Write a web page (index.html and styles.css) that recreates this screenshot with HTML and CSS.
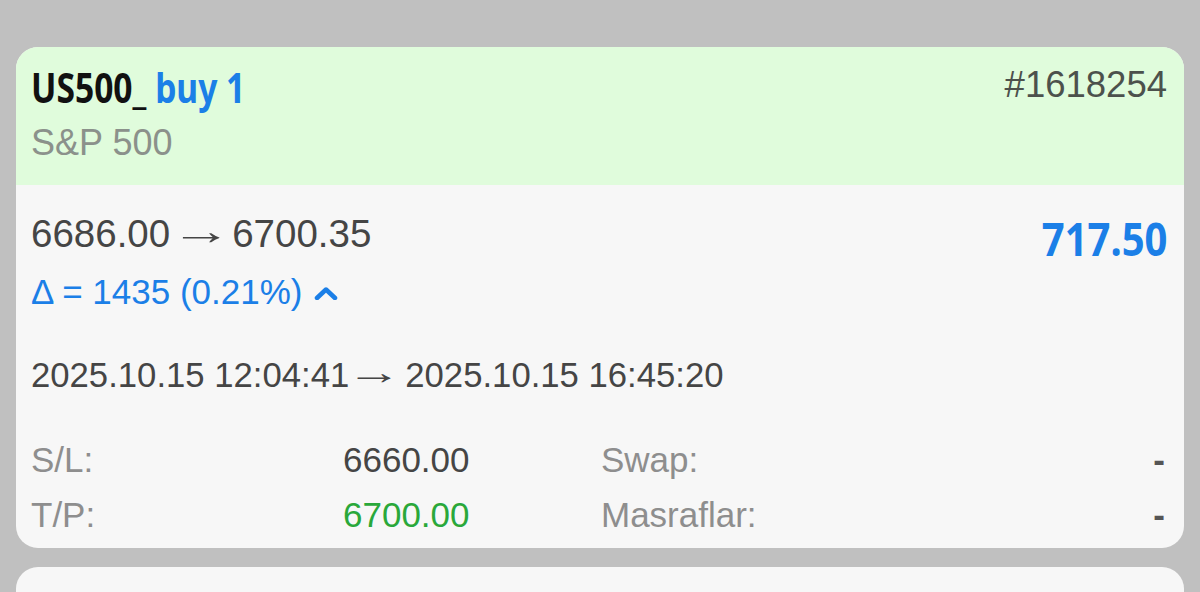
FILE: index.html
```html
<!DOCTYPE html>
<html lang="tr">
<head>
  <meta charset="UTF-8">
  <meta name="viewport" content="width=device-width, initial-scale=1.0">
  <title>Deal</title>
  <link rel="stylesheet" href="styles.css">
</head>
<body>
  <div class="deal-card">
    <div class="deal-head">
      <div class="head-row">
        <div class="deal-title"><span class="symbol">US500_</span> <span class="side">buy 1</span></div>
        <div class="deal-id">#1618254</div>
      </div>
      <div class="deal-desc">S&amp;P 500</div>
    </div>
    <div class="deal-body">
      <div class="price-row">
        <div class="prices">
          <div class="price-line">6686.00<span class="arrow">&rarr;</span>6700.35</div>
          <div class="delta-line">&Delta; = 1435 (0.21%)
            <svg class="chevron" width="24" height="14" viewBox="0 0 24 14"><polyline points="3,12 12,3.5 21,12" fill="none" stroke="currentColor" stroke-width="4.5" stroke-linecap="round" stroke-linejoin="round"/></svg>
          </div>
        </div>
        <div class="profit">717.50</div>
      </div>
      <div class="time-line">2025.10.15 12:04:41<span class="arrow">&rarr;</span>2025.10.15 16:45:20</div>
      <div class="deal-grid">
        <div class="label">S/L:</div>
        <div class="value">6660.00</div>
        <div class="label label-2">Swap:</div>
        <div class="value value-end">-</div>
        <div class="label">T/P:</div>
        <div class="value value-tp">6700.00</div>
        <div class="label label-2">Masraflar:</div>
        <div class="value value-end">-</div>
      </div>
    </div>
  </div>
  <div class="deal-card next-card"></div>
</body>
</html>
```

FILE: styles.css
```css
body {
  margin: 0;
  padding: 47px 16px 0 16px;
  background: #c0c0c0;
  font-family: "Liberation Sans", Arial, sans-serif;
  height: 592px;
  box-sizing: border-box;
  overflow: hidden;
}
.deal-card {
  background: #f7f7f7;
  border-radius: 22px;
  overflow: hidden;
}
.next-card {
  margin-top: 19px;
  height: 25px;
  border-radius: 22px 22px 0 0;
}
/* green header */
.deal-head {
  background: #e0fcdc;
  height: 138px;
  box-sizing: border-box;
  padding: 18px 17px 0 15px;
}
.head-row {
  display: flex;
  justify-content: space-between;
  align-items: flex-start;
}
.deal-title {
  font-family: "Noto Sans", Roboto, sans-serif;
  font-weight: 700;
  font-size: 42px;
  line-height: 44px;
  color: #111;
  display: inline-block;
  transform: scaleX(0.8);
  transform-origin: left center;
  white-space: nowrap;
}
.deal-title .side {
  color: #1b7fe7;
}
.deal-id {
  font-size: 36.5px;
  line-height: 44px;
  margin-top: -2px;
  color: #4c514c;
}
.deal-desc {
  font-size: 36px;
  line-height: 44px;
  margin-top: 12px;
  color: #8b918b;
}
/* body */
.deal-body {
  padding: 29px 17px 6px 15px;
}
.price-row {
  display: flex;
  justify-content: space-between;
  align-items: flex-start;
}
/* long thin arrow between two values */
.arrow {
  display: inline-block;
  width: 36px;
  margin: 0 15px 0 11px;
  text-align: center;
  transform: translateY(-3px) scaleX(1.6);
}
.price-line {
  font-size: 38.5px;
  line-height: 40px;
  color: #454545;
  white-space: nowrap;
}
.delta-line {
  font-size: 35px;
  line-height: 40px;
  margin-top: 18px;
  color: #1b7fe7;
  display: flex;
  align-items: center;
  gap: 12px;
}
.chevron {
  color: #1b7fe7;
  margin-top: 2px;
}
.profit {
  font-family: "Noto Sans", Roboto, sans-serif;
  font-weight: 700;
  font-size: 46px;
  line-height: 48px;
  color: #1b7fe7;
  transform: scaleX(0.87);
  transform-origin: right center;
}
.time-line {
  font-size: 34.7px;
  line-height: 40px;
  margin-top: 43px;
  color: #454545;
  white-space: nowrap;
}
.time-line .arrow {
  margin: 0 13px 0 7px;
}
.deal-grid {
  display: grid;
  grid-template-columns: 312px 124px 1fr auto;
  grid-auto-rows: 55px;
  margin-top: 37px;
  font-size: 35px;
  line-height: 55px;
}
.label {
  color: #8e8e8e;
}
.label-2 {
  padding-left: 134px;
}
.value {
  text-align: right;
  color: #454545;
  white-space: nowrap;
}
.value-tp {
  color: #2aa83a;
}
.value-end {
  color: #555;
  font-weight: 700;
  padding-right: 2px;
}
```
